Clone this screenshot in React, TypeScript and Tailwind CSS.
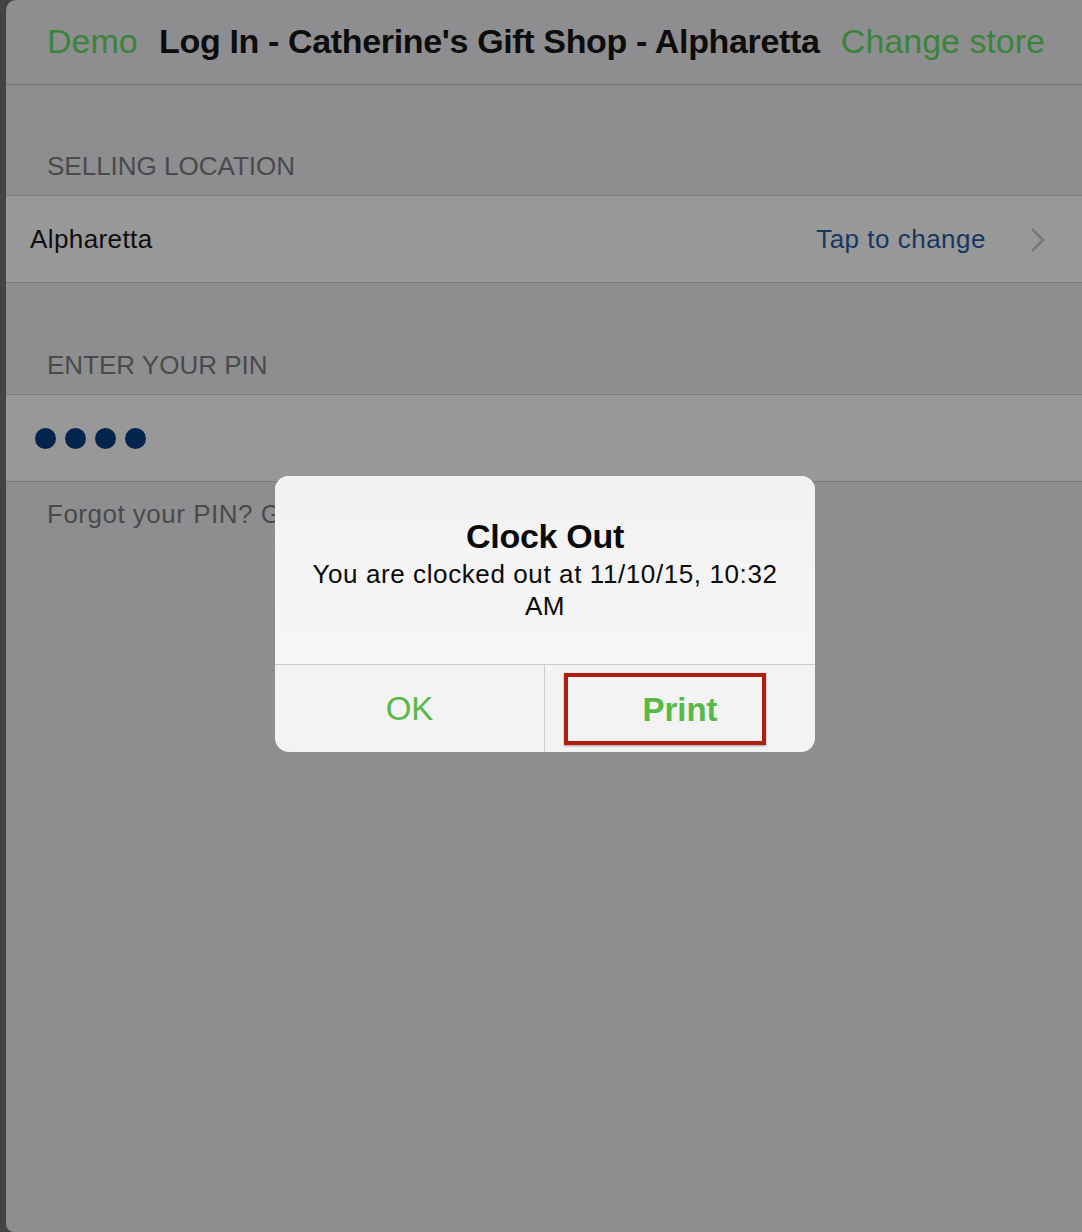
import React from "react";

const font = { fontFamily: '"Liberation Sans", Arial, sans-serif' };

export default function App() {
  return (
    <div className="w-[1082px] h-[1232px] bg-[#434446] flex" style={font}>
      <div className="relative ml-[6px] flex-1 bg-[#8e8e90] rounded-tl-[10px] rounded-bl-[8px] overflow-hidden flex flex-col">
        {/* Header */}
        <div className="h-[85px] border-b border-[#727274] flex items-center justify-between pl-[41px] pr-[37px] pb-[2px]">
          <span className="text-[34px] text-[#3a843a]">Demo</span>
          <span className="text-[34px] font-bold text-[#0c0c0c] tracking-[-0.35px]">
            Log In - Catherine's Gift Shop - Alpharetta
          </span>
          <span className="text-[34px] text-[#3a843a]">Change store</span>
        </div>

        {/* Selling location */}
        <div className="h-[110px] flex items-end pl-[41px] pb-[15px]">
          <span className="text-[26px] text-[#4a4a4c] leading-[28px]">SELLING LOCATION</span>
        </div>
        <div className="h-[88px] bg-[#989899] border-y border-[#7c7c7e] flex items-center pl-[24px] pr-[36px]">
          <span className="text-[26px] tracking-[0.4px] text-[#0e0e0e]">Alpharetta</span>
          <span className="ml-auto text-[26px] tracking-[0.5px] text-[#173761] mr-[44px]">Tap to change</span>
          <svg width="16" height="26" viewBox="0 0 16 26" className="mt-[1px]">
            <path d="M2 2 L13 13 L2 24" fill="none" stroke="#7a7a7c" strokeWidth="3" />
          </svg>
        </div>

        {/* PIN */}
        <div className="h-[111px] flex items-end pl-[41px] pb-[15px]">
          <span className="text-[26px] text-[#4a4a4c] leading-[28px]">ENTER YOUR PIN</span>
        </div>
        <div className="h-[88px] bg-[#989899] border-y border-[#7c7c7e] flex items-center pl-[29px] gap-[9px]">
          <div className="w-[21px] h-[21px] rounded-full bg-[#03244d]" />
          <div className="w-[21px] h-[21px] rounded-full bg-[#03244d]" />
          <div className="w-[21px] h-[21px] rounded-full bg-[#03244d]" />
          <div className="w-[21px] h-[21px] rounded-full bg-[#03244d]" />
        </div>
        <div className="pl-[41px] pt-[13px]">
          <span className="text-[26px] tracking-[0.5px] text-[#4a4a4c]">Forgot your PIN? Get help</span>
        </div>

        {/* Modal */}
        <div className="absolute left-[269px] top-[476px] w-[540px] h-[276px] rounded-[14px] bg-[#f3f3f3] flex flex-col overflow-hidden">
          <div className="flex-1 flex flex-col items-center pt-[40px] px-[30px] bg-gradient-to-b from-[#f2f2f2] to-[#f6f6f6]">
            <div className="text-[34px] font-bold text-[#0a0a0a] leading-[40px] tracking-[-0.3px]">Clock Out</div>
            <div className="text-[26px] tracking-[0.6px] text-[#0a0a0a] leading-[32px] text-center mt-[2px] w-[480px]">
              You are clocked out at 11/10/15, 10:32 AM
            </div>
          </div>
          <div className="h-[88px] border-t border-[#cbcbcd] flex">
            <div className="w-[270px] border-r border-[#cbcbcd] flex items-center justify-center">
              <span className="text-[33px] text-[#59b948]">OK</span>
            </div>
            <div className="flex-1 flex items-start pt-[8px] pl-[19px]">
              <div className="w-[202px] h-[72px] border-[4px] border-[#b01e10] shadow-[0_1px_2px_rgba(0,0,0,0.35)] flex items-center justify-center pt-[2px] pl-[30px]">
                <span className="text-[33px] font-bold text-[#59b948]">Print</span>
              </div>
            </div>
          </div>
        </div>
      </div>
    </div>
  );
}
